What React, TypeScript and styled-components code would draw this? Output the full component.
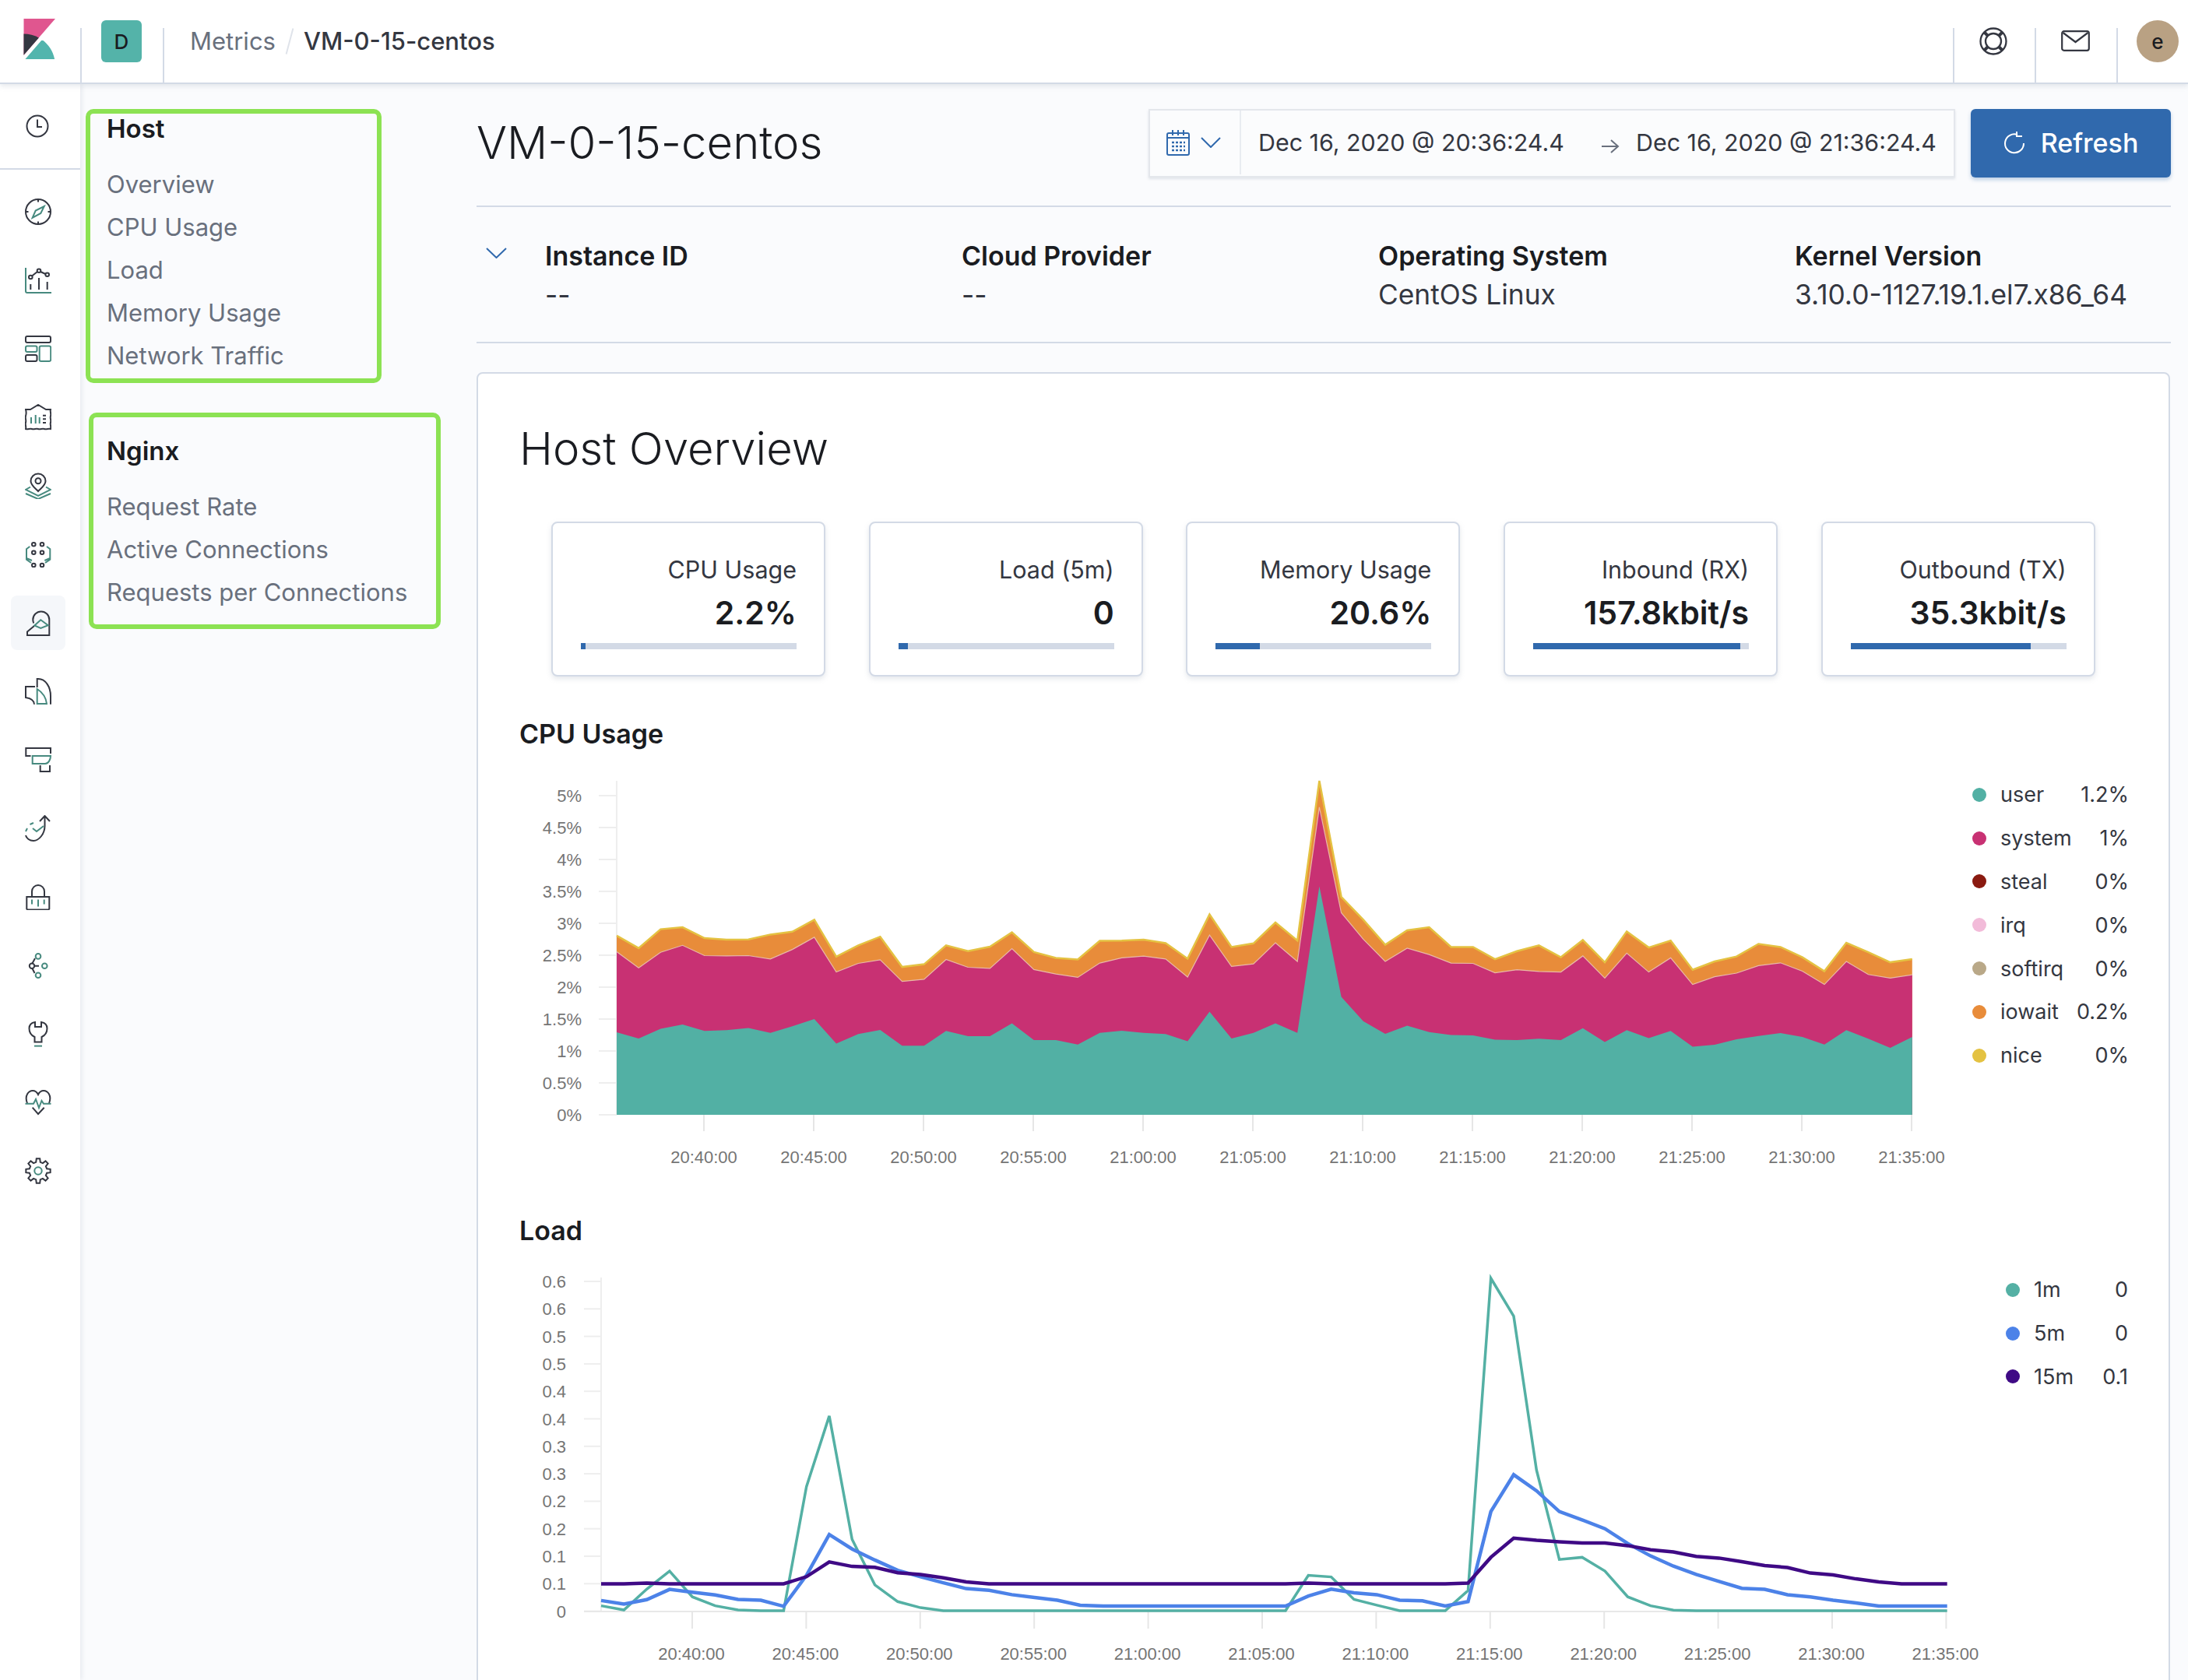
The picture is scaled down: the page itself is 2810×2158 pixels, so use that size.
import React from "react";
import styled, { createGlobalStyle } from "styled-components";

const Global = createGlobalStyle`
  html, body { margin: 0; padding: 0; background: #fafbfd; }
  body { font-family: Inter, "Liberation Sans", sans-serif; color: #343741; }
  * { box-sizing: border-box; }
`;

const Page = styled.div`
  width: 2810px; height: 2158px; overflow: hidden; display: flex; flex-direction: column; background: #fafbfd;
`;
const Header = styled.header`
  height: 108px; flex: none; display: flex; background: #fff; border-bottom: 2px solid #d3dae6;
  box-shadow: 0 3px 6px rgba(152,162,179,.22); position: relative; z-index: 2;
`;
const LogoCell = styled.div`
  width: 103px; flex: none; display: flex; align-items: flex-start; justify-content: center; padding: 24px 4px 0 0;
`;
const HeaderCell = styled.div<{ $w: number }>`
  width: ${(p) => p.$w}px; flex: none; display: flex; align-items: flex-start; justify-content: center;
  margin-top: 36px; border-left: 2px solid #d3dae6;
`;
const SpaceAvatar = styled.div`
  width: 52px; height: 54px; margin: -10px 2px 0 0; border-radius: 6px; background: #54b3a9; color: #1a1c21;
  display: flex; align-items: center; justify-content: center; font-size: 26px; font-weight: 500;
`;
const Crumbs = styled.div`
  flex: 1; display: flex; align-items: center; height: 105px; padding-left: 33px; font-size: 31px; gap: 17px;
`;
const CrumbLink = styled.span` color: #69707d; `;
const CrumbSep = styled.span` width: 2px; height: 34px; background: #dfe3ea; transform: rotate(15deg); `;
const CrumbCurrent = styled.span` color: #343741; font-weight: 500; `;
const Avatar = styled.div`
  width: 54px; height: 54px; margin: 26px 12px 0 24px; border-radius: 50%; background: #b9a183; color: #1a1c21;
  display: flex; align-items: center; justify-content: center; font-size: 26px; font-weight: 500; flex: none;
`;
const Divider = styled.div`
  height: 70px; margin-top: 36px; width: 2px; background: #d3dae6; flex: none;
`;
const HeadIcon = styled.div`
  width: 103px; flex: none; display: flex; align-items: center; justify-content: center; height: 105px; padding-right: 3px;
`;

const Body = styled.div` flex: 1; display: flex; min-height: 0; `;
const Rail = styled.nav`
  width: 103px; flex: none; background: #fff; box-shadow: 2px 0 6px rgba(152,162,179,.2); position: relative; z-index: 1;
`;
const RailTop = styled.div`
  height: 110px; display: flex; align-items: center; justify-content: center; padding-right: 7px; border-bottom: 2px solid #d3dae6;
`;
const RailList = styled.div` padding-top: 10px; display: flex; flex-direction: column; `;
const RailItem = styled.div<{ $active?: boolean }>`
  height: 88px; display: flex; align-items: center; justify-content: center; position: relative; padding-right: 5px;
  &::before {
    content: ""; display: ${(p) => (p.$active ? "block" : "none")}; position: absolute; left: 14px; top: 9px;
    width: 70px; height: 70px; border-radius: 8px; background: #f5f7fa;
  }
  svg { position: relative; }
`;

const Side = styled.aside` width: 509px; flex: none; padding-top: 32px; `;
const NavBox = styled.div<{ $ml: number; $w: number; $h: number; $pt: number; $pl: number }>`
  margin-left: ${(p) => p.$ml}px; width: ${(p) => p.$w}px; height: ${(p) => p.$h}px;
  padding: ${(p) => p.$pt}px 0 0 ${(p) => p.$pl}px; border: 6px solid #8ce253; border-radius: 10px;
  & + & { margin-top: 38px; }
`;
const NavHead = styled.div` font-size: 33px; line-height: 38px; font-weight: 600; color: #1a1c21; margin-bottom: 25px; `;
const NavLink = styled.div` font-size: 31px; line-height: 55px; color: #69707d; white-space: nowrap; `;

const Main = styled.main` width: 2176px; flex: none; padding-top: 32px; display: flex; flex-direction: column; `;
const TitleRow = styled.div`
  height: 126px; flex: none; display: flex; justify-content: space-between; align-items: flex-start; border-bottom: 2px solid #d3dae6;
`;
const PageTitle = styled.h1` margin: 7px 0 0; font-size: 58px; line-height: 72px; font-weight: 300; color: #1a1c21; `;
const Controls = styled.div` display: flex; gap: 20px; `;
const Picker = styled.div`
  width: 1036px; height: 88px; display: flex; background: #fbfcfd; border: 2px solid #e4e7ec; box-shadow: 0 2px 3px rgba(152,162,179,.25);
  font-size: 30.4px; color: #343741; align-items: center; padding-bottom: 2px;
`;
const PickerQuick = styled.div`
  width: 117px; height: 100%; flex: none; display: flex; align-items: center; gap: 14px; padding-left: 21px; border-right: 2px solid #e9ecf1;
`;
const DateText = styled.span<{ $w: number; $pl: number }>` width: ${(p) => p.$w}px; padding-left: ${(p) => p.$pl}px; flex: none; white-space: nowrap; `;
const Arrow = styled.span` flex: none; width: 45px; display: flex; margin-top: 10px; `;
const RefreshBtn = styled.button`
  width: 257px; height: 88px; border: 0; border-radius: 6px; background: #3069ad; color: #fff;
  font: 500 34px Inter, sans-serif; display: flex; align-items: center; justify-content: center; gap: 20px;
  box-shadow: 0 3px 5px rgba(48,105,173,.3); padding: 0 0 2px;
`;
const StatsRow = styled.div`
  height: 175px; border-bottom: 2px solid #d3dae6; display: grid; grid-template-columns: 88px repeat(4, 535px); padding-top: 44px; flex: none;
`;
const Chev = styled.div` padding: 6px 0 0 12px; `;
const StatName = styled.div` font-size: 34px; line-height: 38px; font-weight: 600; color: #1a1c21; `;
const StatValue = styled.div` font-size: 35.3px; line-height: 38px; margin-top: 12px; color: #343741; white-space: nowrap; `;

const Panel = styled.section`
  margin-top: 37px; width: 2175px; flex: none; background: #fff; border: 2px solid #d3dae6; border-radius: 8px;
  padding: 60px 0 40px 53px;
`;
const PanelTitle = styled.h2` margin: 0 0 58px; font-size: 58px; line-height: 72px; font-weight: 300; color: #1a1c21; `;
const Cards = styled.div`
  margin-left: 41px; display: grid; grid-template-columns: repeat(5, 352px); column-gap: 55.7px;
`;
const Card = styled.div`
  height: 199px; background: #fff; border: 2px solid #d3dae6; border-radius: 8px; box-shadow: 0 3px 6px rgba(152,162,179,.25);
  padding: 38px 35px 0 36px; text-align: right;
`;
const CardLabel = styled.div` font-size: 30.5px; line-height: 44px; color: #343741; `;
const CardValue = styled.div` font-size: 41px; line-height: 52px; font-weight: 600; color: #1a1c21; margin-top: 7px; white-space: nowrap; `;
const Track = styled.div` height: 8px; background: #d3dae6; margin-top: 13px; display: flex; `;
const Fill = styled.div` height: 100%; background: #3069ad; `;
const SectionTitle = styled.h3<{ $mt: number }>` margin: ${(p) => p.$mt}px 0 0; font-size: 34px; line-height: 40px; font-weight: 600; color: #1a1c21; `;
const ChartRow = styled.div<{ $mt: number }>` display: flex; margin-top: ${(p) => p.$mt}px; `;
const ChartSvg = styled.svg`
  flex: none; display: block;
  text { font-family: "Liberation Sans", Arial, sans-serif; font-size: 22px; fill: #757575; }
`;
const Legend = styled.div<{ $w: number }>` width: ${(p) => p.$w}px; flex: none; `;
const LegendRow = styled.div`
  height: 55.8px; display: flex; align-items: center; font-size: 27px; color: #343741;
`;
const Dot = styled.span<{ $c: string }>` width: 18px; height: 18px; border-radius: 50%; background: ${(p) => p.$c}; margin-right: 18px; flex: none; `;
const LegendName = styled.span` flex: 1; `;

const INK = "#343741";

const RailSvg = styled.svg`
  fill: none; stroke-width: 2; stroke: ${INK}; display: block;
  .t { stroke: #478a7f; }
`;
const I: React.FC<{ children: React.ReactNode }> = ({ children }) => (
  <RailSvg width={34} height={34} viewBox="0 0 34 34">{children}</RailSvg>
);

const gearPath = (() => {
  const pt = (r: number, deg: number) => {
    const a = ((deg - 90) * Math.PI) / 180;
    return `${(17 + r * Math.cos(a)).toFixed(2)} ${(17 + r * Math.sin(a)).toFixed(2)}`;
  };
  let d = "";
  for (let k = 0; k < 8; k++) {
    const c = k * 45;
    d += `${k ? "L" : "M"}${pt(11.5, c - 14)}L${pt(15.8, c - 8)}L${pt(15.8, c + 8)}L${pt(11.5, c + 14)}`;
  }
  return d + "Z";
})();

const railIcons: React.ReactNode[] = [
  <I>
    <circle cx="17" cy="17" r="16" />
    <path d="M17 1v3.500M17 29.500V33M1 17h3.500M29.500 17H33" />
    <path className="t" d="M24.700 10l-4.400 9-10.600 5.700 4-9.100z" />
  </I>,
  <I>
    <path className="t" d="M1 1v30a2 2 0 0 0 2 2h31" />
    <path d="M7.300 22v7M18 14v15M28.700 19v10M9 11.500l7-5.500M20 6l6.500 3" />
    <circle cx="7.300" cy="13" r="2.300" /><circle cx="18" cy="4.700" r="2.300" /><circle cx="28.700" cy="9.700" r="2.300" />
  </I>,
  <I>
    <rect x="1" y="1" width="32" height="8" rx="2" />
    <rect className="t" x="1" y="13.500" width="14.500" height="7.500" rx="2" />
    <rect x="1" y="25" width="14.500" height="8" rx="2" />
    <rect className="t" x="18.700" y="13.500" width="14.500" height="19.500" rx="2" />
  </I>,
  <I>
    <path d="M1 7h6L17 1l10 6h6c-1 3 1 5 0 8.300s1 5 0 8.300 1 5 0 8.400c-3-1-5 1-8 0s-5 1-8 0-5 1-8 0-5 1-8 0c1-3-1-5 0-8.400s-1-5 0-8.300 1-5 0-8.300z" />
    <path className="t" d="M8 17v8M13.700 14v11M18.700 17v8" />
    <path d="M23 14.700h4M23 19.300h4M23 24h4" />
  </I>,
  <I>
    <path d="M17 24c-5-5-9.500-8-9.500-13a9.500 9.500 0 0 1 19 0c0 5-4.500 8-9.500 13z" />
    <circle cx="17" cy="10.700" r="3.500" />
    <path className="t" d="M7 18.500L1 22l16 8 16-8-6-3.500M1 27l16 7 16-7" />
  </I>,
  <I>
    <circle cx="11.300" cy="4.300" r="2.300" /><circle cx="22" cy="4.300" r="2.300" />
    <circle cx="11.300" cy="14.700" r="2.300" /><circle cx="22" cy="14.700" r="2.300" />
    <circle cx="11.300" cy="31" r="2.300" /><circle cx="22" cy="31" r="2.300" />
    <path className="t" d="M6.300 7L2 10.300v13.400L8 28M2 22l7 3M28 7l4.300 3.300v13.400L26 28M32.300 22l-7 3" />
  </I>,
  <I>
    <path d="M12 21l-9 7.500V33h28.300V13a10.500 10.500 0 0 0-21 0c0 1.500.3 3 .9 4.500" />
    <path className="t" d="M12.300 20.500l8-7.200 9.400 6.900-9.400 3.800z" />
  </I>,
  <I>
    <path d="M15.700 12V1H17c10 0 16 11 16 22v10.700M13 11H1v14c6 1 11 3 11 8.700" />
    <path className="t" d="M15.700 33V14c6.300 4 11.300 11 12.300 19z" />
  </I>,
  <I>
    <path d="M7.500 12H1.300V2H33v7M19.700 24v8H32v-8" />
    <path className="t" d="M9.700 12H33c0 5-3 10-7 10H9.700z" />
  </I>,
  <I>
    <path d="M25.500 1v13c0 10-7.500 19-14.500 19-5 0-9-3-10-7M19 8l6.500-7L32 8" />
    <path className="t" d="M10 17l5 4 9-7M1 21l2-4M6.500 12l4.500-2" />
  </I>,
  <I>
    <path d="M9 17v-7a8 8 0 0 1 16 0v7" />
    <path d="M2.300 17h29v15.500l-1 1H3.300l-1-1z" />
    <path className="t" d="M9 20.500v6M17 20.500v9M24.700 20.500v6" />
  </I>,
  <I>
    <circle cx="9" cy="17.700" r="3.200" />
    <path d="M12 17.700h6M9.500 14.500L13 8M9.500 21l3 6" />
    <circle className="t" cx="17" cy="5.400" r="3.300" /><circle className="t" cx="25.300" cy="17.700" r="3.300" /><circle className="t" cx="17" cy="29.700" r="3.300" />
  </I>,
  <I>
    <path d="M13 2C7 3 5.500 7 5.500 10c0 5 2.500 9 7 11v6.500h9V21c4.500-2 7-6 7-11 0-3-1.500-7-7.500-8v6h-8z" />
    <path className="t" d="M12 32.600h10" />
  </I>,
  <I>
    <path d="M3 18C-1 8 5 2 10 2c3 0 5.500 2 7 5 1.500-3 4-5 7-5 5 0 11 6 7 16M9.700 23.700L17 32l7.700-8.300" />
    <path className="t" d="M.5 18.700H11l3-5.700 4 11 3.500-9 2.500 3.700h9.500" />
  </I>,
  <I>
    <path d={gearPath} />
    <circle className="t" cx="17" cy="17" r="4.700" />
  </I>,
];

const Logo = () => (
  <svg width="52" height="52" viewBox="0 0 32 32">
    <path fill="#e0568f" d="M4 0v28.789L28.935.017z" />
    <path fill="#343741" d="M4 12v16.789l11.906-13.738A24.721 24.721 0 0 0 4 12" />
    <path fill="#52b5ad" d="M18.479 16.664L6.268 30.754l-1.073 1.237h23.191c-1.252-6.292-4.883-11.719-9.908-15.327" />
  </svg>
);

/* ---- chart data: vertical pixel read off the reference ---- */
const cpuUser = [1025,1047,1012,997,1020,1017,1009,1027,1003,977,1065,1031,1016,1073,1073,1020,1039,1039,993,1053,1053,1069,1027,1019,1027,1031,1057,951,1047,1027,993,1027,500,897,985,1030,1001,1024,1035,1036,1051,1053,1048,1053,1010,1060,1017,1046,1020,1077,1070,1050,1038,1028,1042,1069,1017,1048,1081,1042];
const cpuSys = [735,793,737,712,749,750,749,761,727,683,808,777,764,842,834,763,791,795,724,799,815,827,776,757,751,761,826,675,788,779,703,770,215,595,690,770,722,745,776,777,811,800,806,808,750,830,740,808,757,853,825,812,785,775,805,853,770,817,830,818];
const cpuIo = [677,722,654,647,686,692,691,673,663,620,753,712,681,790,780,712,733,717,665,736,757,763,696,695,692,704,760,601,718,705,630,695,120,538,620,710,658,647,718,718,762,733,712,755,693,773,662,720,695,800,770,752,707,718,755,805,703,737,773,762];
const load1 = [1300,1315,1240,1175,1268,1300,1315,1318,1318,870,615,1060,1225,1285,1307,...Array(16).fill(1318),1190,1196,1277,1298,1318,1318,1318,1245,118,255,810,1133,1125,1175,1268,1300,1316,...Array(12).fill(1318)];
const load5 = [1281,1294,1278,1241,1251,1261,1277,1280,1302,1190,1043,1095,1135,1172,1195,1217,1238,1244,1260,1270,1280,1298,...Array(9).fill(1301),1265,1240,1253,1260,1280,1282,1301,1285,960,827,885,960,990,1022,1075,1120,1157,1187,1212,1237,1241,1260,1268,1280,1290,1301,1301,1301,1301];
const load15 = [1221,1221,1218,...Array(6).fill(1221),1195,1142,1158,1161,1181,1187,1199,1214,...Array(14).fill(1221),1218,...Array(6).fill(1221),1218,1125,1056,1064,1069,1073,1073,1083,1098,1106,1122,1128,1141,1155,1162,1182,1189,1203,1214,1221,1221,1221];

const CPU_TOP = 993;
const cx = (i: number) => 125 + 28.2 * i;
const cy = (v: number) => 960 + v / 2.8 - CPU_TOP;
const cBase = 1432 - CPU_TOP;
const cLine = (a: number[]) => a.map((v, i) => `${i ? "L" : "M"}${cx(i).toFixed(1)} ${cy(v).toFixed(1)}`).join("");
const cArea = (a: number[]) => `${cLine(a)}L${cx(59)} ${cBase}L${cx(0)} ${cBase}Z`;
const cpuLabels = ["5%","4.5%","4%","3.5%","3%","2.5%","2%","1.5%","1%","0.5%","0%"];
const times = ["20:40:00","20:45:00","20:50:00","20:55:00","21:00:00","21:05:00","21:10:00","21:15:00","21:20:00","21:25:00","21:30:00","21:35:00"];

const CpuChart = () => (
  <ChartSvg width={1866} height={517}>
    <path d={`M125 10V${cBase}`} stroke="#eee" strokeWidth="2" />
    {cpuLabels.map((l, i) => {
      const y = 29 + i * 41;
      return (
        <g key={l}>
          <path d={`M102 ${y}H125`} stroke="#eee" strokeWidth="2" />
          <text x="80" y={y + 8} textAnchor="end">{l}</text>
        </g>
      );
    })}
    {times.map((t, i) => {
      const x = 237 + i * 141;
      return (
        <g key={t}>
          <path d={`M${x} ${cBase}v21`} stroke="#e6e6e6" strokeWidth="2" />
          <text x={x} y="501" textAnchor="middle">{t}</text>
        </g>
      );
    })}
    <path d={cArea(cpuIo)} fill="#e88c3a" />
    <path d={cLine(cpuIo)} fill="none" stroke="#e4c242" strokeWidth="2.500" />
    <path d={cArea(cpuSys)} fill="#c83173" />
    <path d={cLine(cpuSys)} fill="none" stroke="#e8b8a8" strokeWidth="1.200" />
    <path d={cArea(cpuUser)} fill="#52b0a4" />
  </ChartSvg>
);

const LOAD_TOP = 1629;
const lx = (i: number) => 105 + 29.3 * i;
const ly = (v: number) => 1600 + v / 2.81 - LOAD_TOP;
const lLine = (a: number[]) => a.map((v, i) => `${i ? "L" : "M"}${lx(i).toFixed(1)} ${ly(v).toFixed(1)}`).join("");
const lBase = 2070 - LOAD_TOP;
const loadLabels = ["0.6","0.6","0.5","0.5","0.4","0.4","0.3","0.3","0.2","0.2","0.1","0.1","0"];

const LoadChart = () => (
  <ChartSvg width={1909} height={529}>
    <path d={`M105 12V${lBase}`} stroke="#eee" strokeWidth="2" />
    {loadLabels.map((l, i) => {
      const y = 17 + i * 35.3;
      return (
        <g key={i}>
          <path d={`M83 ${y}H105`} stroke="#eee" strokeWidth="2" />
          <text x="60" y={y + 8} textAnchor="end">{l}</text>
        </g>
      );
    })}
    <path d={`M83 ${lBase}H1833`} stroke="#e8e8e8" strokeWidth="2" />
    {times.map((t, i) => {
      const x = 222 + i * 146.4;
      return (
        <g key={t}>
          <path d={`M${x} ${lBase}v22`} stroke="#e6e6e6" strokeWidth="2" />
          <text x={x - 1} y="503" textAnchor="middle">{t}</text>
        </g>
      );
    })}
    <path d={lLine(load1)} fill="none" stroke="#54b0a4" strokeWidth="3.500" />
    <path d={lLine(load5)} fill="none" stroke="#4c82e8" strokeWidth="4.500" />
    <path d={lLine(load15)} fill="none" stroke="#3f0a85" strokeWidth="4.500" />
  </ChartSvg>
);

const cards = [
  { label: "CPU Usage", value: "2.2%", pct: 2.2 },
  { label: "Load (5m)", value: "0", pct: 4.300 },
  { label: "Memory Usage", value: "20.6%", pct: 20.6 },
  { label: "Inbound (RX)", value: "157.8kbit/s", pct: 96 },
  { label: "Outbound (TX)", value: "35.3kbit/s", pct: 83.5 },
];
const cpuLegend = [
  ["user", "1.2%", "#52b0a4"], ["system", "1%", "#c83173"], ["steal", "0%", "#8a1a10"], ["irq", "0%", "#f2bbd9"],
  ["softirq", "0%", "#b9a888"], ["iowait", "0.2%", "#e88c3a"], ["nice", "0%", "#e4c242"],
];
const loadLegend = [["1m", "0", "#54b0a4"], ["5m", "0", "#4c82e8"], ["15m", "0.1", "#3f0a85"]];

const Blue = "#3069ad";

export default function App() {
  return (
    <Page>
      <Global />
      <Header>
        <LogoCell><Logo /></LogoCell>
        <HeaderCell $w={106}><SpaceAvatar>D</SpaceAvatar></HeaderCell>
        <Divider />
        <Crumbs>
          <CrumbLink>Metrics</CrumbLink>
          <CrumbSep />
          <CrumbCurrent>VM-0-15-centos</CrumbCurrent>
        </Crumbs>
        <Divider />
        <HeadIcon>
          <svg width="36" height="36" viewBox="0 0 36 36" fill="none" stroke={INK}>
            <circle cx="18" cy="18" r="16.500" strokeWidth="2.300" />
            <circle cx="18" cy="18" r="10" strokeWidth="2.300" />
            <path strokeWidth="4" d="M6.500 6.500l5 5M29.500 6.500l-5 5M6.500 29.500l5-5M29.500 29.500l-5-5" />
          </svg>
        </HeadIcon>
        <Divider />
        <HeadIcon>
          <svg width="37" height="27" viewBox="0 0 37 27" fill="none" stroke={INK} strokeWidth="2.200">
            <rect x="1.200" y="1.200" width="34.600" height="24.600" rx="2.500" />
            <path d="M2.500 3l16 12 16-12" />
          </svg>
        </HeadIcon>
        <Divider />
        <Avatar>e</Avatar>
      </Header>
      <Body>
        <Rail>
          <RailTop>
            <I><circle cx="17" cy="17" r="13.500" /><path d="M17 8.500V18h6" /></I>
          </RailTop>
          <RailList>
            {railIcons.map((ic, i) => (
              <RailItem key={i} $active={i === 6}>{ic}</RailItem>
            ))}
          </RailList>
        </Rail>
        <Side>
          <NavBox $ml={7} $w={380} $h={352} $pt={0} $pl={21}>
            <NavHead>Host</NavHead>
            {["Overview", "CPU Usage", "Load", "Memory Usage", "Network Traffic"].map((t) => <NavLink key={t}>{t}</NavLink>)}
          </NavBox>
          <NavBox $ml={11} $w={452} $h={278} $pt={24} $pl={17}>
            <NavHead>Nginx</NavHead>
            {["Request Rate", "Active Connections", "Requests per Connections"].map((t) => <NavLink key={t}>{t}</NavLink>)}
          </NavBox>
        </Side>
        <Main>
          <TitleRow>
            <PageTitle>VM-0-15-centos</PageTitle>
            <Controls>
              <Picker>
                <PickerQuick>
                  <svg width="30" height="34" viewBox="0 0 30 34" fill="none" stroke={Blue} strokeWidth="2">
                    <rect x="1" y="5" width="28" height="28" rx="2" />
                    <path d="M1 11h28M8 1v7M15 1v7M22 1v7" />
                    <path strokeDasharray="3 2" strokeWidth="2.500" d="M7 17h17M7 22h17M7 27h17" />
                  </svg>
                  <svg width="26" height="14" viewBox="0 0 26 14" fill="none" stroke={Blue} strokeWidth="2"><path d="M1 1l12 12L25 1" /></svg>
                </PickerQuick>
                <DateText $w={462} $pl={22}>Dec 16, 2020 @ 20:36:24.4</DateText>
                <Arrow>
                  <svg width="24" height="20" viewBox="0 0 24 20" fill="none" stroke="#69707d" strokeWidth="2"><path d="M1 10h21M13 2l9 8-9 8" /></svg>
                </Arrow>
                <DateText $w={400} $pl={0}>Dec 16, 2020 @ 21:36:24.4</DateText>
              </Picker>
              <RefreshBtn>
                <svg width="28" height="30" viewBox="0 0 28 30" fill="none" stroke="#fff" strokeWidth="2"><path d="M18 5A12 12 0 1 0 26 16M17 1v6h7" /></svg>
                Refresh
              </RefreshBtn>
            </Controls>
          </TitleRow>
          <StatsRow>
            <Chev>
              <svg width="27" height="14" viewBox="0 0 27 14" fill="none" stroke={Blue} strokeWidth="2"><path d="M1 1l12.500 12L26 1" /></svg>
            </Chev>
            {[["Instance ID", "--"], ["Cloud Provider", "--"], ["Operating System", "CentOS Linux"], ["Kernel Version", "3.10.0-1127.19.1.el7.x86_64"]].map(([k, v]) => (
              <div key={k}><StatName>{k}</StatName><StatValue>{v}</StatValue></div>
            ))}
          </StatsRow>
          <Panel>
            <PanelTitle>Host Overview</PanelTitle>
            <Cards>
              {cards.map((c) => (
                <Card key={c.label}>
                  <CardLabel>{c.label}</CardLabel>
                  <CardValue>{c.value}</CardValue>
                  <Track><Fill style={{ width: `${c.pct}%` }} /></Track>
                </Card>
              ))}
            </Cards>
            <SectionTitle $mt={54}>CPU Usage</SectionTitle>
            <ChartRow $mt={30}>
              <CpuChart />
              <Legend $w={201}>
                {cpuLegend.map(([n, v, c]) => (
                  <LegendRow key={n}><Dot $c={c} /><LegendName>{n}</LegendName><span>{v}</span></LegendRow>
                ))}
              </Legend>
            </ChartRow>
            <SectionTitle $mt={51}>Load</SectionTitle>
            <ChartRow $mt={28}>
              <LoadChart />
              <Legend $w={157}>
                {loadLegend.map(([n, v, c]) => (
                  <LegendRow key={n}><Dot $c={c} /><LegendName>{n}</LegendName><span>{v}</span></LegendRow>
                ))}
              </Legend>
            </ChartRow>
          </Panel>
        </Main>
      </Body>
    </Page>
  );
}
